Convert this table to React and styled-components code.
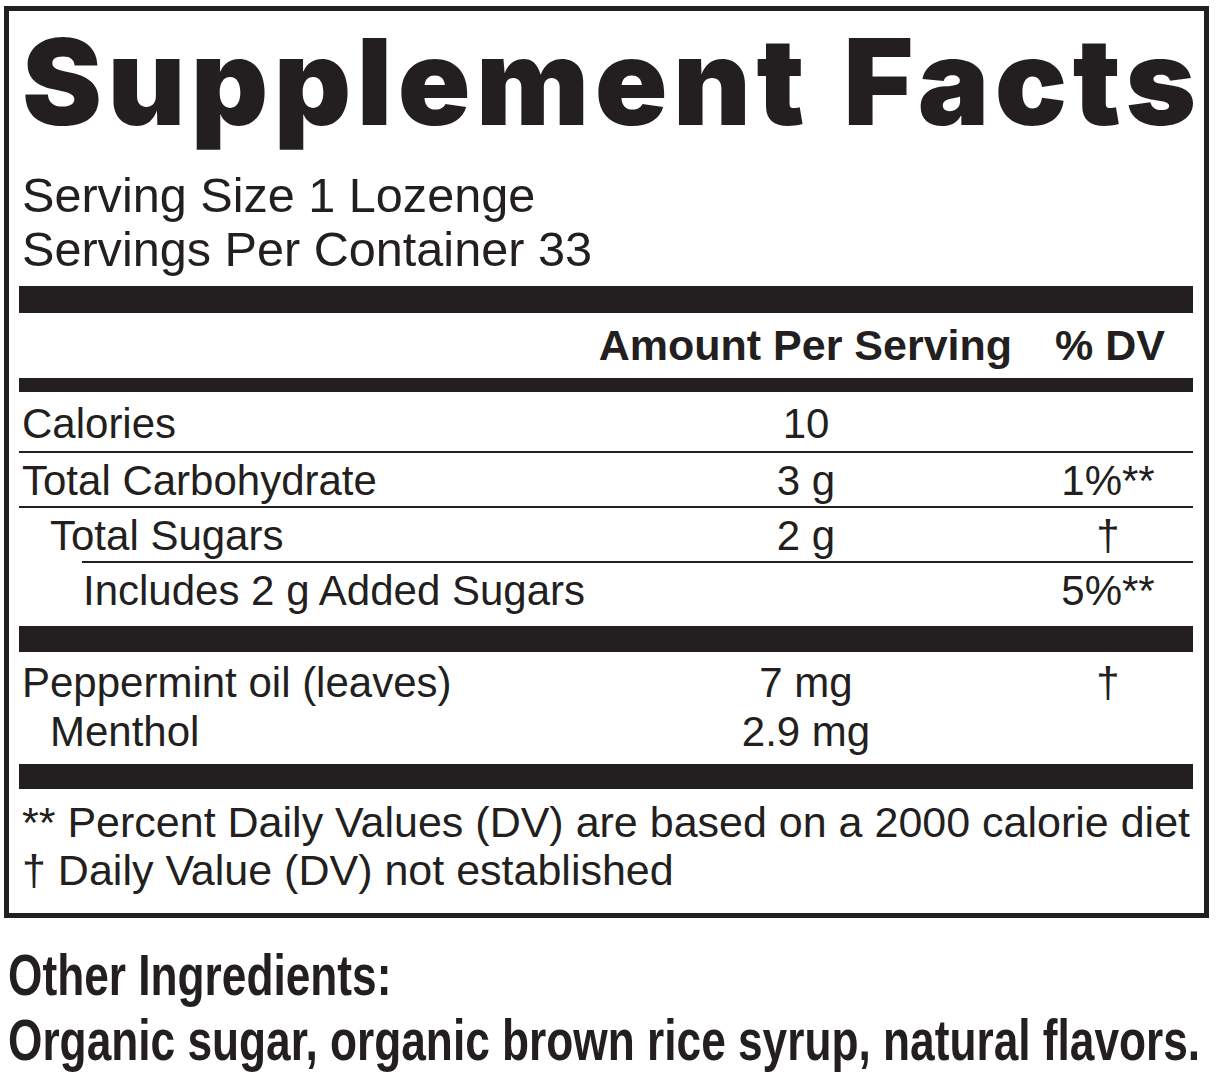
import React from "react";
import styled, { createGlobalStyle } from "styled-components";

const ink = "#231f20";

const GlobalStyle = createGlobalStyle`
  body {
    margin: 0;
    background: #ffffff;
    color: ${ink};
    font-family: "Liberation Sans", Arial, sans-serif;
  }
`;

const Page = styled.div`
  width: 1218px;
  height: 1080px;
  padding: 6px 0 0 4px;
  box-sizing: border-box;
  overflow: hidden;
`;

const Panel = styled.section`
  width: 1205px;
  height: 912px;
  box-sizing: border-box;
  border: 5px solid ${ink};
  padding: 0 11px 0 10px;
`;

const Title = styled.h1`
  margin: 0;
  padding: 11px 0 0 3px;
  font-family: Inter, "Liberation Sans", sans-serif;
  font-weight: 900;
  font-size: 120px;
  line-height: 120px;
  letter-spacing: 5.5px;
  word-spacing: 4px;
  white-space: nowrap;
`;

const ServingInfo = styled.div`
  margin: 26px 0 10px;
  padding-left: 3px;
  font-size: 48.6px;
  line-height: 54px;
`;

const Bar = styled.div`
  height: ${(p) => p.$h}px;
  background: ${ink};
`;

const Rule = styled.div`
  height: 2px;
  margin-left: ${(p) => p.$indent || 0}px;
  background: ${ink};
`;

const HeaderRow = styled.div`
  display: flex;
  justify-content: flex-end;
  gap: 43px;
  height: 65px;
  box-sizing: border-box;
  padding: 8px 28px 0 0;
  font-size: 43px;
  font-weight: 700;
  line-height: 48px;
  white-space: nowrap;
`;

const Row = styled.div`
  display: grid;
  grid-template-columns: 1fr 240px 170px;
  column-gap: 97px;
  height: ${(p) => p.$h}px;
  box-sizing: border-box;
  padding-top: ${(p) => p.$pt}px;
  font-size: 42px;
  line-height: ${(p) => p.$lh || 48}px;
  white-space: nowrap;
`;

const Label = styled.div`
  padding-left: ${(p) => 3 + (p.$indent || 0)}px;
`;

const Amount = styled.div`
  text-align: center;
`;

const Dv = styled.div`
  text-align: center;
`;

const Stack = styled.div`
  height: 112px;
  box-sizing: border-box;
  padding-top: 6px;
`;

const Notes = styled.div`
  padding: 9px 0 0 3px;
  font-size: 43px;
  line-height: 48px;
  white-space: nowrap;
`;

const Ingredients = styled.div`
  margin-top: 25px;
  padding-left: 4px;
  font-weight: 700;
  font-size: 57px;
  line-height: 65px;
  white-space: nowrap;
`;

/* condensed bold face, narrowed from Liberation Sans Bold */
const Condensed = styled.div`
  transform: scaleX(0.776);
  transform-origin: left center;
`;

const nutrients = [
  { label: "Calories", amount: "10", dv: "", h: 59, pt: 8 },
  { label: "Total Carbohydrate", amount: "3 g", dv: "1%**", h: 53, pt: 4 },
  { label: "Total Sugars", amount: "2 g", dv: "†", h: 53, pt: 4, indent: 28, rule: 63 },
  { label: "Includes 2 g Added Sugars", amount: "", dv: "5%**", h: 63, pt: 4, indent: 61, last: true },
];

export default function App() {
  return (
    <Page>
      <GlobalStyle />
      <Panel>
        <Title>Supplement Facts</Title>
        <ServingInfo>
          <div>Serving Size 1 Lozenge</div>
          <div>Servings Per Container 33</div>
        </ServingInfo>
        <Bar $h={27} />
        <HeaderRow>
          <span>Amount Per Serving</span>
          <span>% DV</span>
        </HeaderRow>
        <Bar $h={14} />
        {nutrients.map((n) => (
          <React.Fragment key={n.label}>
            <Row $h={n.h} $pt={n.pt}>
              <Label $indent={n.indent}>{n.label}</Label>
              <Amount>{n.amount}</Amount>
              <Dv>{n.dv}</Dv>
            </Row>
            {!n.last && <Rule $indent={n.rule} />}
          </React.Fragment>
        ))}
        <Bar $h={26} />
        <Stack>
          <Row $h={49} $pt={0} $lh={49}>
            <Label>Peppermint oil (leaves)</Label>
            <Amount>7 mg</Amount>
            <Dv>†</Dv>
          </Row>
          <Row $h={49} $pt={0} $lh={49}>
            <Label $indent={28}>Menthol</Label>
            <Amount>2.9 mg</Amount>
            <Dv />
          </Row>
        </Stack>
        <Bar $h={25} />
        <Notes>
          <div>** Percent Daily Values (DV) are based on a 2000 calorie diet</div>
          <div>† Daily Value (DV) not established</div>
        </Notes>
      </Panel>
      <Ingredients>
        <Condensed>Other Ingredients:</Condensed>
        <Condensed>Organic sugar, organic brown rice syrup, natural flavors.</Condensed>
      </Ingredients>
    </Page>
  );
}
